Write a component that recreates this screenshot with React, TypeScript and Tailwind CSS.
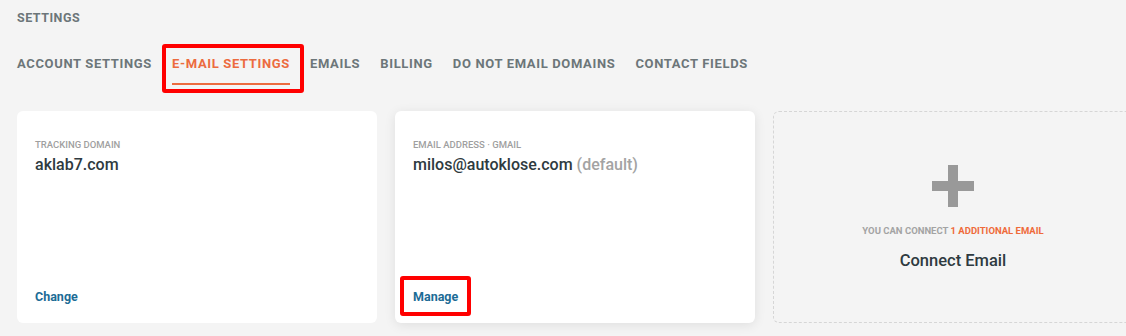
import * as React from "react";

const TABS = ["Account Settings", "E-mail Settings", "Emails", "Billing", "Do not email domains", "Contact Fields"];

function Label({ children }: { children: React.ReactNode }) {
  return <div className="text-[9.5px] font-medium uppercase leading-[12px] text-[#9f9f9f]">{children}</div>;
}

export default function App() {
  const active = 1;
  return (
    <div className="h-[336px] w-[1126px] overflow-hidden bg-[#f4f4f4] px-[17px] pt-[10px] font-['Roboto',sans-serif]">
      <div className="text-[12.5px] font-bold uppercase leading-[15px] tracking-[0.04em] text-[#6c7679]">Settings</div>

      {/* tabs */}
      <div className="mt-[31px] flex gap-5">
        {TABS.map((t, i) => (
          <div key={t} className="relative">
            <div
              className={
                i === active
                  ? "border-b-2 border-[#ec6b3f] pb-3 text-[13px] font-bold uppercase leading-[15px] tracking-[0.65px] text-[#ec6b3f]"
                  : "pb-3 text-[13px] font-bold uppercase leading-[15px] tracking-[0.65px] text-[#6c7679]"
              }
            >
              {t}
            </div>
            {i === active && (
              <div className="pointer-events-none absolute -left-[10px] -right-[14px] -top-[12px] -bottom-[8px] rounded-[3px] border-4 border-[#ff0000]" />
            )}
          </div>
        ))}
      </div>

      {/* cards */}
      <div className="mt-[26px] flex gap-[18px]">
        <div className="flex h-[212px] w-[360px] shrink-0 flex-col rounded-md bg-white px-[18px] pt-[28px] pb-[19px]">
          <Label>Tracking Domain</Label>
          <div className="mt-[4px] text-[16px] font-medium leading-[20px] text-[#2e3a40]">aklab7.com</div>
          <button className="mt-auto block self-start text-[12.5px] font-bold leading-[15px] text-[#1c6c96]">Change</button>
        </div>

        <div className="flex h-[212px] w-[360px] shrink-0 flex-col rounded-md bg-white px-[18px] pt-[28px] pb-[19px] shadow-[0_2px_12px_rgba(0,0,0,0.09)]">
          <Label>Email Address · Gmail</Label>
          <div className="mt-[4px] text-[16px] font-medium leading-[20px] text-[#2e3a40]">
            milos@autoklose.com <span className="text-[#a3a3a3]">(default)</span>
          </div>
          <div className="relative mt-auto self-start">
            <button className="block text-[12.5px] font-bold leading-[15px] text-[#1c6c96]">Manage</button>
            <div className="pointer-events-none absolute -left-[13px] -right-[13px] -top-[13px] -bottom-[12px] rounded-[3px] border-4 border-[#ff0000]" />
          </div>
        </div>

        <div className="flex h-[212px] w-[360px] shrink-0 flex-col items-center rounded-md border border-dashed border-[#d6d6d6] pt-[53px]">
          <svg width="42" height="42" viewBox="0 0 42 42" aria-hidden>
            <rect x="16" y="0" width="10" height="42" fill="#999999" />
            <rect x="0" y="16" width="42" height="10" fill="#999999" />
          </svg>
          <div className="mt-[18px] text-[9.5px] font-bold uppercase leading-[11px] text-[#a3a3a3]">
            You can connect <span className="text-[#ef6a3a]">1 additional email</span>
          </div>
          <div className="mt-[15px] text-[16.5px] font-medium leading-[20px] text-[#2e3a40]">Connect Email</div>
        </div>
      </div>
    </div>
  );
}
